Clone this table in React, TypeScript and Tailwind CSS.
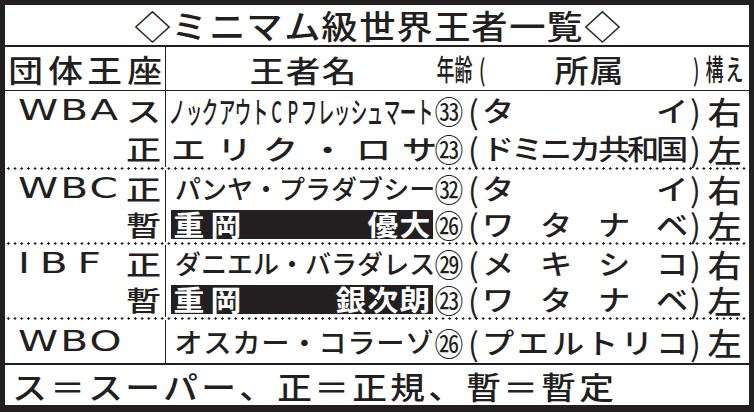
import React from "react";

type Name =
  | { kind: "condensed"; text: string }
  | { kind: "spread"; text: string; cls: string }
  | { kind: "hl"; left: string; right: string };

type Line = { suffix?: string; name: Name; age: string; country: string[]; stance: string };
type Group = { org: string; orgCls: string; lineH: string; lines: Line[] };

const groups: Group[] = [
  {
    org: "WBA",
    orgCls: "tracking-[1.5px]",
    lineH: "h-[38px]",
    lines: [
      { suffix: "ス", name: { kind: "condensed", text: "ノックアウトCPフレッシュマート" }, age: "㉝", country: ["タ", "イ"], stance: "右" },
      { suffix: "正", name: { kind: "spread", text: "エリク・ロサ", cls: "text-[27px] scale-x-[1.3]" }, age: "㉓", country: [..."ドミニカ共和国"], stance: "左" },
    ],
  },
  {
    org: "WBC",
    orgCls: "tracking-[1.5px]",
    lineH: "h-[36px]",
    lines: [
      { suffix: "正", name: { kind: "spread", text: "パンヤ・プラダブシー", cls: "text-[26px] scale-x-[1.0]" }, age: "㉜", country: ["タ", "イ"], stance: "右" },
      { suffix: "暫", name: { kind: "hl", left: "重岡", right: "優大" }, age: "㉖", country: [..."ワタナベ"], stance: "左" },
    ],
  },
  {
    org: "IBF",
    orgCls: "tracking-[7px]",
    lineH: "h-[36px]",
    lines: [
      { suffix: "正", name: { kind: "spread", text: "ダニエル・バラダレス", cls: "text-[26px] scale-x-[1.0]" }, age: "㉙", country: [..."メキシコ"], stance: "右" },
      { suffix: "暫", name: { kind: "hl", left: "重岡", right: "銀次朗" }, age: "㉓", country: [..."ワタナベ"], stance: "左" },
    ],
  },
  {
    org: "WBO",
    orgCls: "tracking-[1.5px]",
    lineH: "h-[43px]",
    lines: [
      { name: { kind: "spread", text: "オスカー・コラーゾ", cls: "text-[27px] scale-x-[1.05]" }, age: "㉖", country: [..."プエルトリコ"], stance: "左" },
    ],
  },
];

function Spread({ text, cls, className = "" }: { text: string[]; cls: string; className?: string }) {
  return (
    <div className={`flex items-center justify-between ${className}`}>
      {text.map((c, i) => (
        <span key={i} className={`inline-block ${cls}`}>
          {c}
        </span>
      ))}
    </div>
  );
}

function Cells({ text, cls, className = "" }: { text: string[]; cls: string; className?: string }) {
  return (
    <div className={`flex items-center ${className}`}>
      {text.map((c, i) => (
        <span key={i} className="flex min-w-0 flex-1 basis-0 justify-center">
          <span className={`inline-block shrink-0 ${cls}`}>{c}</span>
        </span>
      ))}
    </div>
  );
}

function Gapped({ text, cls, className = "" }: { text: string[]; cls: string; className?: string }) {
  return (
    <div className={`flex items-center ${className}`}>
      {text.map((c, i) => (
        <span key={i} className={`inline-block ${cls}`}>
          {c}
        </span>
      ))}
    </div>
  );
}

function NameCell({ name }: { name: Name }) {
  if (name.kind === "condensed") {
    return <Cells text={[...name.text]} cls="text-[30px] scale-x-[0.55]" className="w-full" />;
  }
  if (name.kind === "spread") {
    return <Spread text={[...name.text]} cls={name.cls} className="w-full pl-[6px]" />;
  }
  return (
    <div className="ml-[2px] flex h-[29px] w-[262px] items-center justify-between bg-[#231f20] px-[4px] font-bold text-white">
      <Gapped text={[...name.left]} cls="text-[28px] scale-x-[1.1]" className="gap-[9px]" />
      <Gapped text={[...name.right]} cls="text-[28px] scale-x-[1.1]" className="gap-[4px]" />
    </div>
  );
}

function Dots() {
  return (
    <div className="h-[3px] shrink-0 bg-[radial-gradient(circle,#231f20_1px,transparent_1.4px)] bg-[length:6.7px_3px] bg-repeat-x" />
  );
}

export default function App() {
  return (
    <div className="h-[412px] w-[754px] bg-[#231f20] px-[5px] pt-[5px] pb-[7px] font-['Noto_Sans_CJK_JP',sans-serif] font-medium leading-none text-[#231f20]">
      <div className="flex h-full flex-col bg-white">
        {/* title */}
        <div className="flex h-[42px] shrink-0 items-center justify-center border-b-2 border-[#231f20]">
          <Gapped text={[..."◇ミニマム級世界王者一覧◇"]} cls="text-[33px] scale-x-[1.1]" className="gap-[4.5px]" />
        </div>

        {/* header */}
        <div className="flex h-[44px] shrink-0 border-b border-[#231f20]">
          <div className="flex w-[161px] items-center border-r border-[#231f20] px-[5px]">
            <Spread text={[..."団体王座"]} cls="text-[31px] scale-x-[1.12]" className="w-full" />
          </div>
          <div className="flex flex-1 items-center pl-[3px]">
            <div className="flex w-[267px] justify-center">
              <Gapped text={[..."王者名"]} cls="text-[30px] scale-x-[1.15]" className="gap-[6px]" />
            </div>
            <Cells text={["年", "齢", "("]} cls="text-[29px] scale-x-[0.62]" className="w-[55px]" />
            <div className="flex w-[195px] justify-center">
              <Gapped text={[..."所属"]} cls="text-[31px] scale-x-[1.1]" className="gap-[4px]" />
            </div>
            <Cells text={[")", "構", "え"]} cls="text-[29px] scale-x-[0.62]" className="w-[58px]" />
          </div>
        </div>

        {groups.map((g, gi) => (
          <React.Fragment key={g.org}>
            {gi > 0 && <Dots />}
            <div className="flex shrink-0 flex-col">
              {g.lines.map((l, li) => (
                <div key={li} className={`flex ${g.lineH}`}>
                  <div className="flex w-[161px] items-center border-r border-[#231f20] pl-[13px] pr-[4px]">
                    {li === 0 && (
                      <span className={`inline-block origin-left scale-x-[1.4] font-['DejaVu_Sans',sans-serif] text-[29px] font-normal ${g.orgCls}`}>
                        {g.org}
                      </span>
                    )}
                    {l.suffix && (
                      <span className="ml-auto flex w-[36px] justify-center">
                        <span className="inline-block text-[27px] scale-x-[1.3]">{l.suffix}</span>
                      </span>
                    )}
                  </div>
                  <div className="flex flex-1 items-center pl-[3px]">
                    <div className="flex w-[264px] items-center">
                      <NameCell name={l.name} />
                    </div>
                    <div className="flex w-[32px] justify-center">
                      <span className="inline-block text-[32px] font-normal scale-x-[0.9]">{l.age}</span>
                    </div>
                    <div className="flex w-[17px] justify-center">
                      <span className="text-[32px] font-normal">(</span>
                    </div>
                    <Spread text={l.country} cls="text-[28px] scale-x-[1.15]" className="w-[206px] px-[2px]" />
                    <div className="flex w-[15px] justify-center">
                      <span className="text-[32px] font-normal">)</span>
                    </div>
                    <div className="flex w-[42px] justify-center">
                      <span className="inline-block text-[31px] scale-x-[1.1]">{l.stance}</span>
                    </div>
                  </div>
                </div>
              ))}
            </div>
          </React.Fragment>
        ))}

        {/* footer */}
        <div className="flex h-[42px] shrink-0 items-center border-t-2 border-[#231f20] pl-[9px]">
          <Gapped text={[..."ス＝スーパー、正＝正規、暫＝暫定"]} cls="text-[31px] scale-x-[1.12]" className="gap-[6.8px]" />
        </div>
      </div>
    </div>
  );
}
